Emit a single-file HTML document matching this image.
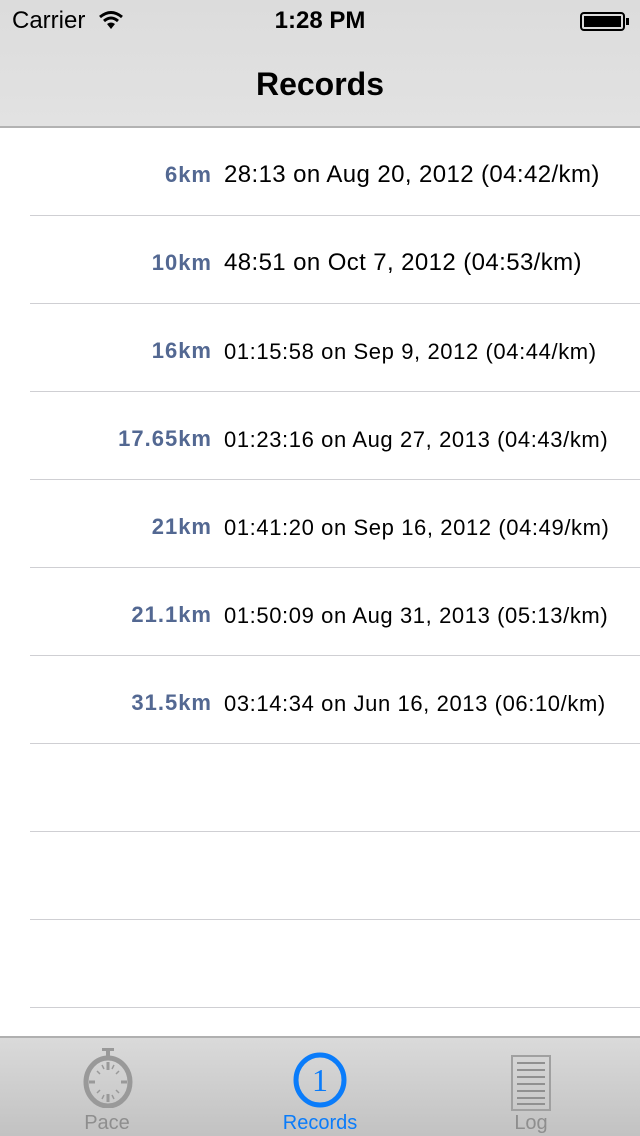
<!DOCTYPE html>
<html><head><meta charset="utf-8"><style>
*{margin:0;padding:0;box-sizing:border-box}
body{width:640px;height:1136px;overflow:hidden;background:#fff;font-family:"Liberation Sans",sans-serif;position:relative}
.top{position:absolute;left:0;top:0;width:640px;height:128px;background:linear-gradient(#dcdcdc,#e2e2e2);border-bottom:2px solid #b2b2b2}
.carrier{position:absolute;left:12px;top:7px;font-size:24px;color:#000}
.time{position:absolute;left:0;width:640px;text-align:center;top:7px;font-size:24px;font-weight:bold}
.title{position:absolute;left:0;width:640px;text-align:center;top:66px;font-size:32px;font-weight:bold}
.row{position:absolute;left:30px;width:610px;height:88px;border-bottom:1px solid #cfcfd3}
.lab{position:absolute;right:429px;top:34px;font-weight:bold;font-size:22px;letter-spacing:1px;margin-right:-1px;color:#536892;white-space:nowrap}
.det{position:absolute;left:194px;top:33px;font-size:24px;letter-spacing:0.4px;color:#000;white-space:nowrap}
.det.s{font-size:22px;letter-spacing:0.6px;top:35px}
.tab{position:absolute;left:0;top:1036px;width:640px;height:100px;background:linear-gradient(#dadada,#c2c2c2);border-top:2px solid #b0b0b0}
.tl{position:absolute;top:74px;font-size:20px;color:#8e8e8e;text-align:center;width:120px}
</style></head><body>
<div class="top">
<div class="carrier">Carrier</div>
<svg style="position:absolute;left:98px;top:10px" width="26" height="20" viewBox="0 0 26 20"><path d="M2 7Q13-2 24 7" stroke="#000" stroke-width="3" fill="none"/><path d="M6 11Q13 5 20 11" stroke="#000" stroke-width="3" fill="none"/><path d="M9 14L13 19L17 14Q13 11 9 14Z" fill="#000"/></svg>
<div class="time">1:28 PM</div>
<div style="position:absolute;left:580px;top:12px;width:45px;height:19px;border:2px solid #000;border-radius:4px;padding:2px"><div style="background:#000;width:100%;height:100%"></div></div>
<div style="position:absolute;left:626px;top:18px;width:3px;height:7px;background:#000"></div>
<div class="title">Records</div>
</div>
<div class="row" style="top:128px"><span class="lab">6km</span><span class="det">28:13 on Aug 20, 2012 (04:42/km)</span></div>
<div class="row" style="top:216px"><span class="lab">10km</span><span class="det">48:51 on Oct 7, 2012 (04:53/km)</span></div>
<div class="row" style="top:304px"><span class="lab">16km</span><span class="det s">01:15:58 on Sep 9, 2012 (04:44/km)</span></div>
<div class="row" style="top:392px"><span class="lab">17.65km</span><span class="det s">01:23:16 on Aug 27, 2013 (04:43/km)</span></div>
<div class="row" style="top:480px"><span class="lab">21km</span><span class="det s">01:41:20 on Sep 16, 2012 (04:49/km)</span></div>
<div class="row" style="top:568px"><span class="lab">21.1km</span><span class="det s">01:50:09 on Aug 31, 2013 (05:13/km)</span></div>
<div class="row" style="top:656px"><span class="lab">31.5km</span><span class="det s">03:14:34 on Jun 16, 2013 (06:10/km)</span></div>
<div class="row" style="top:744px"></div>
<div class="row" style="top:832px"></div>
<div class="row" style="top:920px"></div>
<div class="tab">
<svg style="position:absolute;left:80px;top:8px" width="56" height="62" viewBox="0 0 56 62">
<rect x="22" y="2" width="12" height="3" fill="#999"/><rect x="26" y="4" width="4" height="6" fill="#999"/>
<ellipse cx="28" cy="36" rx="22" ry="24" fill="none" stroke="#999" stroke-width="5"/>
<g stroke="#999" stroke-width="3"><line x1="28" y1="16" x2="28" y2="24"/><line x1="28" y1="48" x2="28" y2="56"/><line x1="9" y1="36" x2="15" y2="36"/><line x1="41" y1="36" x2="47" y2="36"/></g>
<g stroke="#999" stroke-width="1.5"><line x1="17" y1="25" x2="20" y2="28"/><line x1="39" y1="25" x2="36" y2="28"/><line x1="17" y1="47" x2="20" y2="44"/><line x1="39" y1="47" x2="36" y2="44"/><line x1="22" y1="19" x2="24" y2="23"/><line x1="34" y1="19" x2="32" y2="23"/><line x1="22" y1="53" x2="24" y2="49"/><line x1="34" y1="53" x2="32" y2="49"/></g>
</svg>
<div class="tl" style="left:47px">Pace</div>
<svg style="position:absolute;left:290px;top:14px" width="60" height="60" viewBox="0 0 60 60"><ellipse cx="30" cy="28" rx="24" ry="25" fill="none" stroke="#0a7cfa" stroke-width="5"/><text x="30" y="39" text-anchor="middle" font-family="Liberation Serif,serif" font-size="32" fill="#0a7cfa">1</text></svg>
<div class="tl" style="left:260px;color:#0a7cfa">Records</div>
<svg style="position:absolute;left:510px;top:16px" width="42" height="58" viewBox="0 0 42 58"><rect x="2" y="2" width="38" height="54" fill="none" stroke="#a0a0a0" stroke-width="2"/><g stroke="#909090" stroke-width="2"><line x1="7" y1="9" x2="35" y2="9"/><line x1="7" y1="16" x2="35" y2="16"/><line x1="7" y1="23" x2="35" y2="23"/><line x1="7" y1="30" x2="35" y2="30"/><line x1="7" y1="37" x2="35" y2="37"/><line x1="7" y1="44" x2="35" y2="44"/><line x1="7" y1="50" x2="35" y2="50"/></g></svg>
<div class="tl" style="left:471px">Log</div>
</div>
</body></html>
